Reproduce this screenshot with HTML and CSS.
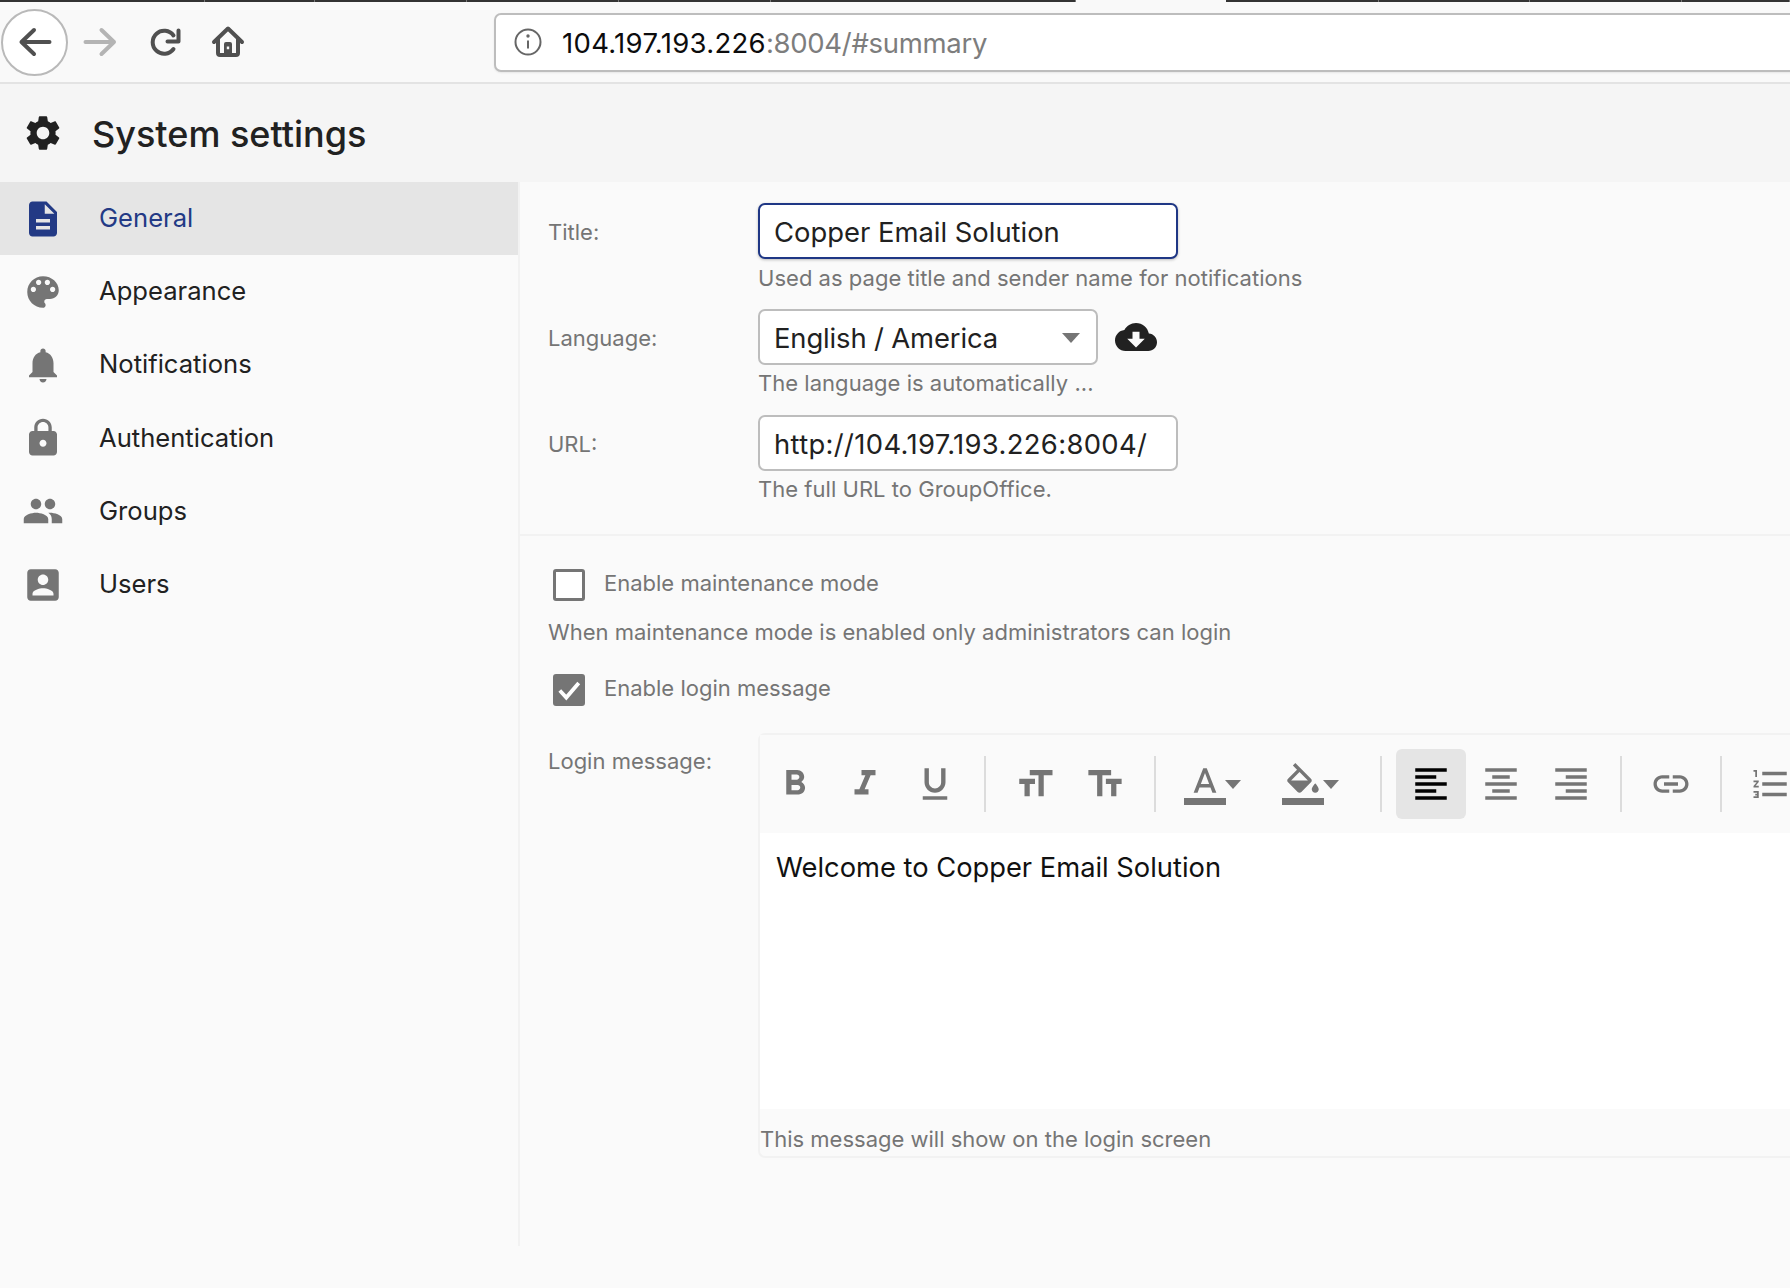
FILE: index.html
```html
<!DOCTYPE html>
<html lang="en">
<head>
<meta charset="utf-8">
<title>System settings</title>
<link rel="stylesheet" href="styles.css">
</head>
<body>
<div class="tabstrip">
  <i class="tab"></i><i class="tab"></i><i class="tab"></i><i class="tab"></i><i class="tab"></i><i class="tab"></i><i class="tab tab-active"></i><i class="tab"></i><i class="tab"></i><i class="tab"></i><i class="tab"></i>
</div>
<nav class="browserbar">
  <div class="nav-buttons">
    <button class="back-btn" aria-label="Back"><svg class="nav-icon" viewBox="0 0 36 36"><path d="M32.500 18H4.500M17 6 4.500 18 17 30"/></svg></button>
    <span class="nav-btn nav-disabled"><svg class="nav-icon" viewBox="0 0 36 36"><path d="M3.500 18h28.500M19.500 6 32 18 19.500 30"/></svg></span>
    <span class="nav-btn nav-reload"><svg class="nav-icon" viewBox="0 0 36 36"><path d="M26.500 25A11.500 11.500 0 1 1 26.500 11.500"/><path d="M31.500 6.500V17.500H20.500"/></svg></span>
    <span class="nav-btn nav-home"><svg class="nav-icon" viewBox="0 0 36 36"><path d="M4 18 18 4.500 32 18"/><path d="M8 15V29a2 2 0 0 0 2 2H26a2 2 0 0 0 2-2V15"/><path class="home-door" fill-rule="evenodd" d="M14 31V20a2 2 0 0 1 2-2h4a2 2 0 0 1 2 2v11zM16.800 22.500v2.800h2.400v-2.800z"/></svg></span>
  </div>
  <div class="address">
    <svg class="info-icon" viewBox="0 0 28 28"><circle cx="14" cy="14" r="12.500"/><path d="M14 12.500v8"/><circle class="info-dot" cx="14" cy="8" r="1.700"/></svg>
    <span class="url-host">104.197.193.226</span><span class="url-rest">:8004/#summary</span>
  </div>
</nav>
<header class="page-header">
  <svg class="header-icon" viewBox="0 0 24 24"><path d="M19.140 12.940c.04-.3.06-.61.06-.94 0-.32-.02-.64-.07-.94l2.030-1.580c.18-.14.23-.41.12-.61l-1.920-3.320c-.12-.22-.37-.29-.59-.22l-2.390.96c-.5-.38-1.030-.7-1.620-.94l-.36-2.540c-.04-.24-.24-.41-.48-.41h-3.840c-.24 0-.43.17-.47.41l-.36 2.540c-.59.24-1.130.57-1.620.94l-2.390-.96c-.22-.08-.47 0-.59.22L2.740 8.870c-.12.21-.08.47.12.61l2.030 1.580c-.05.3-.09.63-.09.94s.02.64.07.94l-2.030 1.580c-.18.14-.23.41-.12.61l1.920 3.320c.12.22.37.29.59.22l2.390-.96c.5.38 1.030.7 1.620.94l.36 2.540c.05.24.24.41.48.41h3.840c.24 0 .44-.17.47-.41l.36-2.540c.59-.24 1.130-.56 1.620-.94l2.390.96c.22.08.47 0 .59-.22l1.920-3.320c.12-.22.07-.47-.12-.61l-2.010-1.580zM12 15.600c-1.980 0-3.600-1.620-3.600-3.600s1.620-3.600 3.600-3.600 3.600 1.620 3.600 3.600-1.620 3.600-3.600 3.600z"/></svg>
  <h1 class="page-title">System settings</h1>
</header>
<div class="layout">
  <aside class="sidebar">
    <a class="side-item side-active"><svg class="side-icon" viewBox="0 0 24 24"><path d="M14 2H6c-1.100 0-1.990.9-1.990 2L4 20c0 1.100.89 2 1.990 2H18c1.100 0 2-.9 2-2V8l-6-6zm2 16H8v-2h8v2zm0-4H8v-2h8v2zm-3-5V3.500L18.500 9H13z"/></svg><span class="side-text">General</span></a>
    <a class="side-item"><svg class="side-icon" viewBox="0 0 24 24"><path d="M12 3c-4.970 0-9 4.030-9 9s4.030 9 9 9c.83 0 1.500-.67 1.500-1.500 0-.39-.15-.74-.39-1.010-.23-.26-.38-.61-.38-.99 0-.83.67-1.500 1.500-1.500H16c2.760 0 5-2.240 5-5 0-4.420-4.030-8-9-8zm-5.500 9c-.83 0-1.500-.67-1.500-1.500S5.670 9 6.500 9 8 9.670 8 10.500 7.330 12 6.500 12zm3-4C8.670 8 8 7.330 8 6.500S8.670 5 9.500 5s1.500.67 1.500 1.500S10.330 8 9.500 8zm5 0c-.83 0-1.500-.67-1.500-1.500S13.670 5 14.500 5s1.500.67 1.500 1.500S15.330 8 14.500 8zm3 4c-.83 0-1.500-.67-1.500-1.500S16.670 9 17.500 9s1.500.67 1.500 1.500-.67 1.500-1.500 1.500z"/></svg><span class="side-text">Appearance</span></a>
    <a class="side-item"><svg class="side-icon" viewBox="0 0 24 24"><path d="M12 22c1.100 0 2-.9 2-2h-4c0 1.100.89 2 2 2zm6-6v-5c0-3.070-1.640-5.640-4.500-6.320V4c0-.83-.67-1.500-1.500-1.500s-1.500.67-1.500 1.500v.68C7.630 5.360 6 7.920 6 11v5l-2 2v1h16v-1l-2-2z"/></svg><span class="side-text">Notifications</span></a>
    <a class="side-item"><svg class="side-icon" viewBox="0 0 24 24"><path d="M18 8h-1V6c0-2.760-2.240-5-5-5S7 3.240 7 6v2H6c-1.100 0-2 .9-2 2v10c0 1.100.9 2 2 2h12c1.100 0 2-.9 2-2V10c0-1.100-.9-2-2-2zm-6 9c-1.100 0-2-.9-2-2s.9-2 2-2 2 .9 2 2-.9 2-2 2zm3.100-9H8.900V6c0-1.710 1.390-3.100 3.100-3.100 1.710 0 3.100 1.390 3.100 3.100v2z"/></svg><span class="side-text">Authentication</span></a>
    <a class="side-item"><svg class="side-icon" viewBox="0 0 24 24"><path d="M16 11c1.660 0 2.990-1.340 2.990-3S17.660 5 16 5c-1.660 0-3 1.340-3 3s1.340 3 3 3zm-8 0c1.660 0 2.990-1.340 2.990-3S9.660 5 8 5C6.340 5 5 6.340 5 8s1.340 3 3 3zm0 2c-2.330 0-7 1.170-7 3.500V19h14v-2.500c0-2.330-4.670-3.500-7-3.500zm8 0c-.29 0-.62.02-.97.05 1.160.84 1.970 1.970 1.970 3.450V19h6v-2.500c0-2.330-4.670-3.500-7-3.500z"/></svg><span class="side-text">Groups</span></a>
    <a class="side-item"><svg class="side-icon" viewBox="0 0 24 24"><path d="M3 5v14c0 1.100.89 2 2 2h14c1.100 0 2-.9 2-2V5c0-1.100-.9-2-2-2H5c-1.110 0-2 .9-2 2zm12 4c0 1.660-1.340 3-3 3s-3-1.340-3-3 1.340-3 3-3 3 1.340 3 3zm-9 8c0-2 4-3.100 6-3.100s6 1.100 6 3.100v1H6v-1z"/></svg><span class="side-text">Users</span></a>
  </aside>
  <main class="content">
    <section class="fields">
      <div class="field">
        <label class="field-label">Title:</label>
        <div class="field-body">
          <div class="input input-wide input-focus">Copper Email Solution</div>
          <p class="hint">Used as page title and sender name for notifications</p>
        </div>
      </div>
      <div class="field">
        <label class="field-label">Language:</label>
        <div class="field-body">
          <div class="select-row">
            <div class="input input-select"><span class="select-value">English / America</span><i class="caret"></i></div>
            <svg class="cloud-icon" viewBox="0 0 24 24"><path d="M19.350 10.040C18.670 6.590 15.640 4 12 4 9.110 4 6.600 5.640 5.350 8.040 2.340 8.360 0 10.910 0 14c0 3.310 2.690 6 6 6h13c2.760 0 5-2.240 5-5 0-2.640-2.050-4.780-4.650-4.960zM17 13l-5 5-5-5h3V9h4v4h3z"/></svg>
          </div>
          <p class="hint">The language is automatically ...</p>
        </div>
      </div>
      <div class="field">
        <label class="field-label">URL:</label>
        <div class="field-body">
          <div class="input input-wide input-url">http://104.197.193.226:8004/</div>
          <p class="hint">The full URL to GroupOffice.</p>
        </div>
      </div>
    </section>
    <section class="options">
      <div class="check-row">
        <span class="checkbox"></span><span class="check-label">Enable maintenance mode</span>
      </div>
      <p class="option-hint">When maintenance mode is enabled only administrators can login</p>
      <div class="check-row">
        <span class="checkbox checkbox-on"><svg viewBox="0 0 24 24"><path d="M3.500 12.500 9.500 19 21 5.500"/></svg></span><span class="check-label">Enable login message</span>
      </div>
      <div class="editor-field">
        <label class="editor-label">Login message:</label>
        <div class="editor">
          <div class="editor-toolbar">
            <span class="tool"><svg viewBox="0 0 24 24"><path d="M15.600 10.790c.97-.67 1.650-1.770 1.650-2.790 0-2.260-1.750-4-4-4H7v14h7.040c2.090 0 3.710-1.700 3.710-3.790 0-1.520-.86-2.820-2.150-3.420zM10 6.500h3c.83 0 1.500.67 1.500 1.500s-.67 1.500-1.500 1.500h-3v-3zm3.500 9H10v-3h3.500c.83 0 1.500.67 1.500 1.500s-.67 1.500-1.500 1.500z"/></svg></span>
            <span class="tool"><svg viewBox="0 0 24 24"><path d="M10 4v3h2.210l-3.420 8H6v3h8v-3h-2.210l3.420-8H18V4z"/></svg></span>
            <span class="tool"><svg viewBox="0 0 24 24"><path d="M12 17c3.310 0 6-2.690 6-6V3h-2.500v8c0 1.930-1.570 3.500-3.500 3.500S8.500 12.930 8.500 11V3H6v8c0 3.310 2.690 6 6 6zm-7 2v2h14v-2H5z"/></svg></span>
            <i class="tool-sep"></i>
            <span class="tool"><svg viewBox="0 0 24 24"><path d="M9 4v3h5v12h3V7h5V4H9zm-6 8h3v7h3v-7h3V9H3v3z"/></svg></span>
            <span class="tool"><svg viewBox="0 0 24 24"><path d="M2.500 4v3h5v12h3V7h5V4h-13zm19 5h-9v3h3v7h3v-7h3V9z"/></svg></span>
            <i class="tool-sep"></i>
            <span class="tool tool-menu"><svg viewBox="0 0 24 24"><path d="M11 3 5.500 17h2.250l1.120-3h6.250l1.120 3h2.250L13 3h-2zm-1.380 9L12 5.670 14.380 12H9.620z"/><path d="M0 20h24v4H0z"/></svg><i class="tool-caret"></i></span>
            <span class="tool tool-menu"><svg viewBox="0 0 24 24"><path d="M16.560 8.940 7.620 0 6.210 1.410l2.380 2.380-5.150 5.150c-.59.59-.59 1.540 0 2.120l5.500 5.500c.29.29.68.44 1.060.44s.77-.15 1.060-.44l5.500-5.500c.59-.58.59-1.530 0-2.120zM5.210 10 10 5.210 14.790 10H5.210zM19 11.500s-2 2.170-2 3.500c0 1.100.9 2 2 2s2-.9 2-2c0-1.330-2-3.500-2-3.500z"/><path d="M0 20h24v4H0z"/></svg><i class="tool-caret"></i></span>
            <i class="tool-sep"></i>
            <span class="tool tool-active"><svg viewBox="0 0 24 24"><path d="M15 15H3v2h12v-2zm0-8H3v2h12V7zM3 13h18v-2H3v2zm0 8h18v-2H3v2zM3 3v2h18V3H3z"/></svg></span>
            <span class="tool"><svg viewBox="0 0 24 24"><path d="M7 15v2h10v-2H7zm-4 6h18v-2H3v2zm0-8h18v-2H3v2zm4-6v2h10V7H7zM3 3v2h18V3H3z"/></svg></span>
            <span class="tool"><svg viewBox="0 0 24 24"><path d="M3 21h18v-2H3v2zm6-4h12v-2H9v2zm-6-4h18v-2H3v2zm6-4h12V7H9v2zM3 3v2h18V3H3z"/></svg></span>
            <i class="tool-sep"></i>
            <span class="tool"><svg viewBox="0 0 24 24"><path d="M3.900 12c0-1.710 1.390-3.100 3.100-3.100h4V7H7c-2.760 0-5 2.240-5 5s2.240 5 5 5h4v-1.900H7c-1.710 0-3.100-1.390-3.100-3.100zM8 13h8v-2H8v2zm9-6h-4v1.900h4c1.710 0 3.100 1.390 3.100 3.100s-1.390 3.100-3.100 3.100h-4V17h4c2.760 0 5-2.240 5-5s-2.240-5-5-5z"/></svg></span>
            <i class="tool-sep"></i>
            <span class="tool"><svg viewBox="0 0 24 24"><path d="M2 17h2v.5H3v1h1v.5H2v1h3v-4H2v1zm1-9h1V4H2v1h1v3zm-1 3h1.800L2 13.100v.9h3v-1H3.200L5 10.900V10H2v1zm5-6v2h14V5H7zm0 14h14v-2H7v2zm0-6h14v-2H7v2z"/></svg></span>
          </div>
          <div class="editor-body">Welcome to Copper Email Solution</div>
          <p class="editor-hint">This message will show on the login screen</p>
        </div>
      </div>
    </section>
  </main>
</div>
</body>
</html>
```
FILE: styles.css
```css
* { box-sizing: border-box; }
html, body { margin: 0; height: 100%; }
body {
  width: 1790px;
  height: 1288px;
  overflow: hidden;
  background: #fafafa;
  font-family: Inter, "Noto Sans", sans-serif;
  color: #212121;
}
p, h1 { margin: 0; }

/* browser chrome */
.tabstrip {
  display: grid;
  grid-template-columns: 205px 110px 152px 152px 152px 305px 150px 153px 151px 152px 1fr;
  height: 2px;
  background: #333;
}
.tab { border-right: 1px solid #777; }
.tab-active { background: #f9f9f9; border-right: 0; }
.browserbar {
  display: flex;
  align-items: center;
  height: 82px;
  background: #f9f9f9;
  border-bottom: 2px solid #e3e3e3;
}
.nav-buttons { display: flex; align-items: center; width: 494px; flex: none; padding-left: 1px; }
.back-btn {
  width: 67px;
  height: 67px;
  flex: none;
  display: flex;
  align-items: center;
  justify-content: center;
  padding: 0;
  background: #fff;
  border: 2px solid #b9b9b9;
  border-radius: 50%;
}
.nav-btn { display: flex; align-items: center; justify-content: center; width: 64px; height: 67px; flex: none; }
.nav-icon { width: 36px; height: 36px; flex: none; fill: none; stroke: #505050; stroke-width: 4; stroke-linecap: round; stroke-linejoin: round; }
.nav-disabled .nav-icon { stroke: #b4b4b4; }
.nav-reload { margin-left: 1px; }
.nav-home { margin-left: -1px; }
.home-door { fill: #505050; stroke: none; }
.address {
  display: flex;
  align-items: center;
  width: 1400px;
  height: 59px;
  flex: none;
  padding: 1px 0 0 18px;
  background: #fff;
  border: 2px solid #bdbdbd;
  border-radius: 7px;
  font-size: 27.500px;
  box-shadow: 0 1px 2px rgba(0,0,0,.08);
}
.info-icon { width: 28px; height: 28px; margin: -1px 20px 0 0; flex: none; fill: none; stroke: #666; stroke-width: 2; }
.info-dot { fill: #666; stroke: none; }
.url-host { color: #0c0c0d; letter-spacing: .3px; }
.url-rest { color: #7d7d7d; letter-spacing: -.3px; }

/* page header */
.page-header {
  display: flex;
  align-items: center;
  height: 98px;
  padding-left: 22px;
  background: #f5f5f5;
}
.header-icon { width: 42px; height: 42px; fill: #212121; flex: none; }
.page-title { margin: 2px 0 0 28px; font-size: 36px; font-weight: 500; }

/* layout */
.layout { display: flex; height: 1064px; }
.sidebar { width: 520px; flex: none; border-right: 2px solid #f2f2f2; }
.side-item {
  display: flex;
  align-items: center;
  gap: 35px;
  height: 73.200px;
  padding-left: 22px;
  font-size: 25.600px;
  color: #212121;
}
.side-text { margin-bottom: 2px; }
.side-icon { width: 42px; height: 42px; fill: #757575; flex: none; }
.side-active { background: #e5e5e5; color: #233a85; }
.side-active .side-icon { fill: #233a85; }

.content { flex: 1; min-width: 0; }
.fields {
  padding: 21px 0 13px 28px;
  border-bottom: 2px solid #f2f2f2;
}
.field { display: flex; height: 106px; }
.field-label { width: 210px; flex: none; padding-top: 16px; font-size: 22px; color: #757575; }
.field-body { flex: none; }
.input {
  display: flex;
  align-items: center;
  height: 56px;
  padding: 2px 14px 0;
  background: #fff;
  border: 2px solid #bdbdbd;
  border-radius: 7px;
  font-size: 27.400px;
  color: #212121;
}
.input-wide { width: 420px; }
.input-url { letter-spacing: .35px; }
.input-focus { border-color: #1f3785; box-shadow: 0 1px 3px rgba(0,0,0,.25); }
.input-select { width: 340px; justify-content: space-between; padding-right: 16px; }
.select-value { letter-spacing: -.13px; }
.caret { width: 0; height: 0; border-left: 9px solid transparent; border-right: 9px solid transparent; border-top: 10px solid #757575; }
.select-row { display: flex; align-items: center; gap: 17px; }
.cloud-icon { width: 42px; height: 42px; fill: #212121; }
.hint { margin-top: 5px; font-size: 22px; line-height: 27px; color: #757575; letter-spacing: .03px; }
.input-focus + .hint { margin-top: 6px; }

.options { padding: 32px 0 0 28px; }
.check-row { display: flex; align-items: center; height: 33px; padding-left: 5px; }
.checkbox {
  display: flex;
  width: 32px;
  height: 32px;
  flex: none;
  background: #fff;
  border: 3px solid #757575;
  border-radius: 3px;
}
.checkbox-on { background: #757575; }
.checkbox-on svg { width: 100%; height: 100%; fill: none; stroke: #fff; stroke-width: 3.500; }
.check-label { margin-left: 19px; margin-top: -3px; font-size: 22px; color: #757575; }
.option-hint { margin: 18px 0 27px; font-size: 22px; line-height: 27px; color: #757575; }

.editor-field { display: flex; margin-top: 27px; }
.editor-label { width: 210px; flex: none; padding-top: 15px; font-size: 22px; color: #757575; }
.editor {
  width: 1100px;
  flex: none;
  border: 2px solid #f2f2f2;
  border-right: 0;
  border-radius: 7px 0 0 7px;
}
.editor-toolbar {
  display: flex;
  align-items: center;
  height: 98px;
  background: #fafafa;
}
.tool {
  display: flex;
  align-items: center;
  justify-content: center;
  width: 70px;
  height: 70px;
  flex: none;
  border-radius: 6px;
}
.tool svg { width: 42px; height: 42px; fill: #757575; flex: none; }
.tool-menu { width: 98px; justify-content: flex-start; padding-left: 14px; }
.tool-caret {
  width: 0;
  height: 0;
  margin-left: -1px;
  margin-top: 1px;
  border-left: 8.500px solid transparent;
  border-right: 8.500px solid transparent;
  border-top: 9px solid #757575;
}
.tool-sep { width: 2px; height: 56px; margin: 0 14px; background: #dcdcdc; flex: none; }
.tool-active { background: #e5e5e5; }
.tool-active svg { fill: #000; }
.editor-body {
  height: 276px;
  padding: 19px 16px;
  background: #fff;
  font-size: 27.300px;
  line-height: 32px;
  color: #111;
}
.editor-hint { padding: 17px 0 3px; font-size: 22px; line-height: 27px; color: #757575; }
```
